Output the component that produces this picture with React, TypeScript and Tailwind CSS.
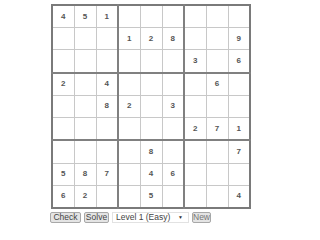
const puzzle = [
  "451......",
  "...128..9",
  "......3.6",
  "2.4....6.",
  "..82.3...",
  "......271",
  "....8...7",
  "587.46...",
  "62..5...4",
];

function cellBorder(r: number, c: number) {
  const right = c === 2 || c === 5 ? "border-r-2 border-r-[#808080]" : "border-r border-r-[#c8c8c8]";
  const bottom = r === 2 || r === 5 ? "border-b-2 border-b-[#808080]" : "border-b border-b-[#c8c8c8]";
  return `${right} ${bottom}`;
}

export default function App() {
  return (
    <div
      className="bg-white min-h-screen pl-[51px] pt-[4px]"
      style={{ fontFamily: '"Liberation Sans", Arial, sans-serif' }}
    >
      <table className="border-collapse table-fixed w-[200px] h-[205px] border-2 border-[#7a7a7a]">
        <tbody>
          {puzzle.map((row, r) => (
            <tr key={r}>
              {row.split("").map((ch, c) => (
                <td
                  key={c}
                  className={`${cellBorder(r, c)} p-0 text-center align-middle text-[8px] font-bold text-[#555]`}
                >
                  {ch === "." ? "" : ch}
                </td>
              ))}
            </tr>
          ))}
        </tbody>
      </table>
      <div className="flex items-center gap-[3px] mt-[3px] -ml-[1px] text-[8.5px] text-[#444] whitespace-nowrap">
        <button className="h-[11px] w-[31px] p-0 leading-[9px] text-center border border-[#a8a8a8] rounded-[2px] bg-[#e4e4e4]">
          Check
        </button>
        <button className="h-[11px] w-[25px] p-0 leading-[9px] text-center border border-[#a8a8a8] rounded-[2px] bg-[#e4e4e4]">
          Solve
        </button>
        <div className="h-[11px] w-[77px] flex items-center justify-between pl-[3px] pr-[5px] border border-[#e2e2e2] bg-white">
          <span className="leading-[9px]">Level 1 (Easy)</span>
          <span className="text-[5px] text-[#333]">▼</span>
        </div>
        <button className="h-[11px] w-[19px] p-0 leading-[9px] text-center border border-[#a8a8a8] rounded-[2px] bg-[#e4e4e4] text-[#777]">
          New
        </button>
      </div>
    </div>
  );
}
